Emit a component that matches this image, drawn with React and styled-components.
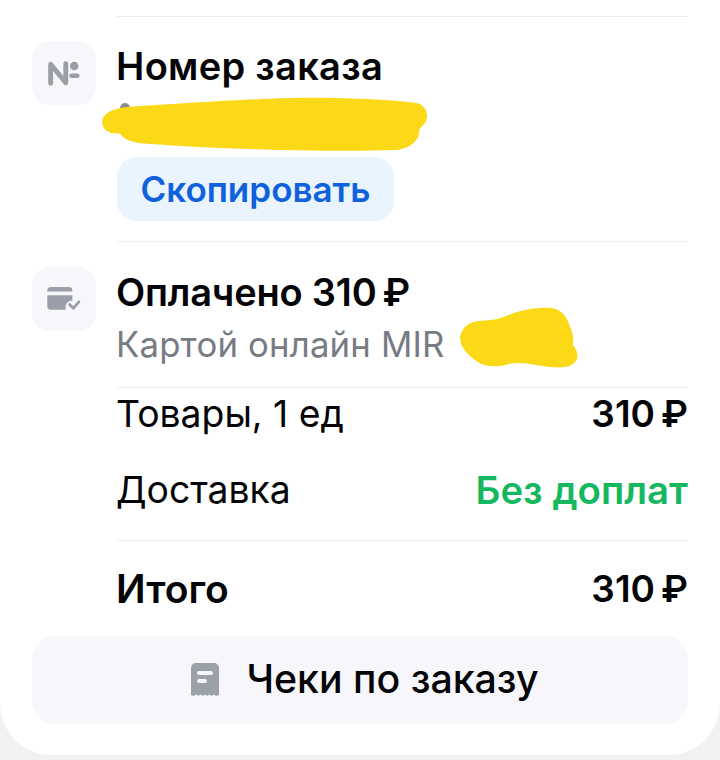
import styled, { createGlobalStyle } from 'styled-components'

const GlobalStyle = createGlobalStyle`
  html, body {
    margin: 0;
    padding: 0;
    background: #f2f2f5;
    font-family: Inter, "Noto Sans", sans-serif;
    color: #050508;
    -webkit-font-smoothing: antialiased;
  }
`

function NumberIcon() {
  return (
    <svg width="32" height="27" viewBox="0 0 36 30" fill="none">
      <path d="M3 26V4.5L20 25.5V4" stroke="#9b9ea6" strokeWidth="5.5" strokeLinecap="round" strokeLinejoin="round" />
      <circle cx="29.5" cy="6.5" r="4.8" fill="#9b9ea6" />
      <rect x="24" y="15" width="11.500" height="5" rx="2.500" fill="#9b9ea6" />
    </svg>
  )
}

function CardIcon() {
  return (
    <svg width="34" height="26" viewBox="0 0 36 28" fill="none">
      <path d="M0 5a4 4 0 0 1 4-4h19a4 4 0 0 1 4 4v1H0z" fill="#9a9ea8" />
      <path d="M0 10h27v5.5a7.5 7.5 0 0 0-7 10H4a4 4 0 0 1-4-4z" fill="#9a9ea8" />
      <path d="M24 20l4 4 6-7" stroke="#9a9ea8" strokeWidth="3" strokeLinecap="round" strokeLinejoin="round" />
    </svg>
  )
}

function ReceiptIcon() {
  return (
    <svg width="30" height="34" viewBox="0 0 30 34" fill="none">
      <path
        fillRule="evenodd"
        d="M6 1h18a5 5 0 0 1 5 5v27c-2 1-3.500 1-5-.5-1.500 1.500-3 1.500-4.500 0-1.500 1.500-3 1.500-4.500 0-1.500 1.500-3 1.500-4.500 0-1.500 1.500-3 1.500-4.500 0-1.500 1.500-3 1.500-5 .5V6a5 5 0 0 1 5-5z"
        fill="#9aa1a9"
      />
      <rect x="7" y="9" width="16" height="4" rx="2" fill="#f6f6fb" />
      <rect x="7" y="17" width="10" height="4" rx="2" fill="#f6f6fb" />
    </svg>
  )
}

function App() {
  return (
    <>
      <GlobalStyle />
      <Page>
        <Card>
          <Section $pad="24px 0 20px">
            <IconTile><NumberIcon /></IconTile>
            <SectionBody>
              <Title>Номер заказа</Title>
              <MaskedLine>
                <HiddenDigit />
                <OrderScribble viewBox="0 0 330 60" preserveAspectRatio="none">
                  <path d="M2 24C4 16 14 11 30 10 90 6 130 3 190 1 240 0 290 3 315 6 326 9 328 22 321 29 318 31 317 33 317 38 315 47 306 52 296 54 230 56 130 54 40 47 28 45 22 41 20 37 12 38 2 36 2 24Z" fill="#fcd916" />
                </OrderScribble>
              </MaskedLine>
              <CopyButton>Скопировать</CopyButton>
            </SectionBody>
          </Section>

          <Section $pad="25px 0 17px">
            <IconTile><CardIcon /></IconTile>
            <SectionBody>
              <PaidTitle>Оплачено 310{'\u2009'}₽</PaidTitle>
              <PayLine>
                <PayText>Картой онлайн MIR</PayText>
                <CardScribble viewBox="0 0 120 64">
                  <path d="M1 30C3 20 10 15 20 14 28 13 35 13 42 11 58 4 75 0 92 1 103 2 108 10 112 22 115 30 114 34 114 38 119 44 121 52 114 57 106 63 90 60 77 58 66 56 60 55 50 57 38 61 24 60 16 53 8 47 1 40 1 30Z" fill="#fcd916" />
                </CardScribble>
              </PayLine>
            </SectionBody>
          </Section>

          <Summary>
            <Row $height={54}>
              <RowLabel>Товары, 1 ед</RowLabel>
              <Amount>310{'\u2009'}₽</Amount>
            </Row>
            <Row $height={98}>
              <RowLabel>Доставка</RowLabel>
              <FreeText>Без доплат</FreeText>
            </Row>
            <TotalRow>
              <TotalLabel>Итого</TotalLabel>
              <Amount>310{'\u2009'}₽</Amount>
            </TotalRow>
          </Summary>

          <ReceiptButton>
            <ReceiptIcon />
            <span>Чеки по заказу</span>
          </ReceiptButton>
        </Card>
      </Page>
    </>
  )
}

export default App

const Page = styled.div`
  width: 720px;
  height: 760px;
  overflow: hidden;
  background: #f2f2f5;
`

const Card = styled.div`
  box-sizing: border-box;
  height: 755px;
  padding: 16px 32px 0;
  background: #ffffff;
  border-radius: 0 0 52px 52px;
`

const Section = styled.section`
  display: flex;
  gap: 21px;
  padding: ${({ $pad }) => $pad};
  position: relative;

  &::before {
    content: '';
    position: absolute;
    top: 0;
    left: 85px;
    right: 0;
    height: 1px;
    background: #ececf0;
  }
`

const IconTile = styled.div`
  flex: none;
  width: 64px;
  height: 64px;
  margin-top: 1px;
  display: flex;
  align-items: center;
  justify-content: center;
  background: #f6f6fb;
  border-radius: 18px;
`

const SectionBody = styled.div`
  flex: 1;
  min-width: 0;
`

const Title = styled.div`
  margin-left: -1px;
  font-size: 38px;
  line-height: 52px;
  font-weight: 600;
  letter-spacing: 0.3px;
  white-space: nowrap;
`

const PaidTitle = styled(Title)`
  letter-spacing: -0.2px;
`

const MaskedLine = styled.div`
  position: relative;
  height: 65px;
`

const HiddenDigit = styled.span`
  position: absolute;
  left: 3px;
  top: 11px;
  width: 10px;
  height: 10px;
  border-radius: 50%;
  background: #8a8d92;
`

const OrderScribble = styled.svg`
  position: absolute;
  left: -17px;
  top: 5px;
  width: 332px;
  height: 59px;
`

const CopyButton = styled.button`
  display: block;
  box-sizing: border-box;
  width: 277px;
  height: 64px;
  padding: 0;
  border: none;
  border-radius: 20px;
  background: #eaf4fe;
  color: #0f62dc;
  font-family: inherit;
  font-size: 35px;
  font-weight: 600;
`

const PayLine = styled.div`
  position: relative;
  height: 52px;
  display: flex;
  align-items: center;
`

const PayText = styled.span`
  margin-left: -1px;
  font-size: 34.7px;
  color: #767b84;
  letter-spacing: 0.2px;
  white-space: nowrap;
`

const CardScribble = styled.svg`
  position: absolute;
  left: 342px;
  top: -11px;
  width: 120px;
  height: 64px;
`

const Summary = styled.div`
  margin-left: 85px;
  border-top: 1px solid #ececf0;
`

const Row = styled.div`
  box-sizing: border-box;
  display: flex;
  align-items: center;
  justify-content: space-between;
  height: ${({ $height }) => $height}px;
  padding-bottom: 3px;
`

const RowLabel = styled.span`
  margin-left: -1px;
  font-size: 37.3px;
`

const Amount = styled.span`
  font-size: 37px;
  font-weight: 600;
`

const FreeText = styled.span`
  font-size: 38.4px;
  font-weight: 600;
  color: #16b85f;
`

const TotalRow = styled(Row)`
  height: 96px;
  padding-bottom: 0;
  border-top: 1px solid #ececf0;
`

const TotalLabel = styled.span`
  margin-left: -1px;
  font-size: 39px;
  font-weight: 600;
`

const ReceiptButton = styled.div`
  box-sizing: border-box;
  display: flex;
  align-items: center;
  justify-content: center;
  gap: 26px;
  height: 88px;
  padding: 0 0 3px 9px;
  background: #f6f6fb;
  border-radius: 24px;
  font-size: 39.3px;
  font-weight: 500;
`
